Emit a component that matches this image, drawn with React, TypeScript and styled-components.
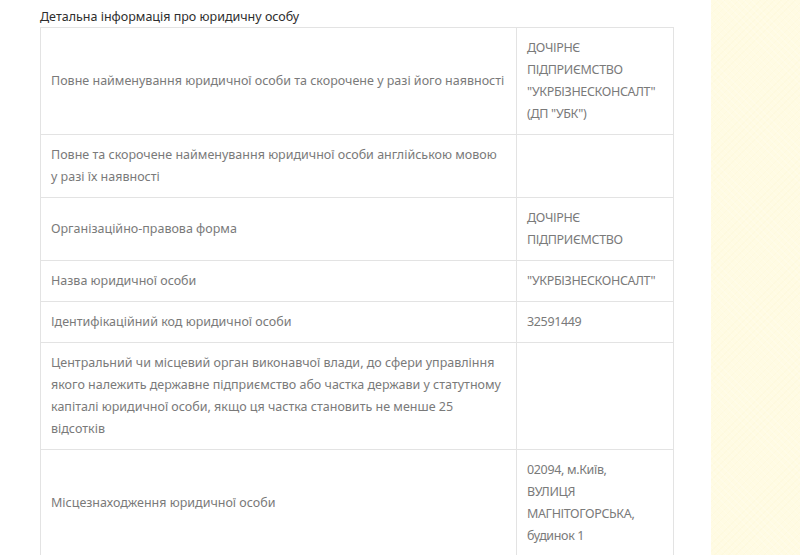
import React from "react";
import styled, { createGlobalStyle } from "styled-components";

const Global = createGlobalStyle`
  html, body { margin: 0; padding: 0; background: #ffffff; }
  body { font-family: "Noto Sans", "Open Sans", sans-serif; }
`;

const Page = styled.div`
  display: flex;
  width: 800px;
  height: 555px;
  overflow: hidden;
`;

const Main = styled.main`
  width: 711px;
  flex: none;
  padding: 8px 0 0 40px;
  box-sizing: border-box;
  background: #ffffff;
`;

const Side = styled.aside`
  flex: 1;
  background-color: #fffbe3;
  background-image:
    repeating-linear-gradient(45deg, rgba(255,255,255,0.18) 0 1px, transparent 1px 5px),
    repeating-linear-gradient(-45deg, rgba(245,235,180,0.10) 0 1px, transparent 1px 5px);
`;

const Title = styled.h2`
  margin: 0 0 2px 0;
  font-size: 12.5px;
  font-weight: 400;
  line-height: 17px;
  color: #2e2e2e;
`;

const Table = styled.table`
  border-collapse: collapse;
  table-layout: fixed;
  width: 634px;
`;

const Cell = styled.td<{ $w?: number }>`
  width: ${(p) => (p.$w ? `${p.$w}px` : "auto")};
  border: 1px solid #e3e3e3;
  padding: 9px 10px;
  font-size: 12.5px;
  line-height: 22px;
  color: #7a7a7a;
  vertical-align: middle;
  word-wrap: break-word;
`;

const ValueLine = styled.span`
  display: block;
  white-space: nowrap;
  letter-spacing: -0.35px;
`;

const rows: [string, string[]][] = [
  [
    "Повне найменування юридичної особи та скорочене у разі його наявності",
    ["ДОЧІРНЄ", "ПІДПРИЄМСТВО", "\"УКРБІЗНЕСКОНСАЛТ\"", "(ДП \"УБК\")"],
  ],
  [
    "Повне та скорочене найменування юридичної особи англійською мовою у разі їх наявності",
    [],
  ],
  ["Організаційно-правова форма", ["ДОЧІРНЄ", "ПІДПРИЄМСТВО"]],
  ["Назва юридичної особи", ["\"УКРБІЗНЕСКОНСАЛТ\""]],
  ["Ідентифікаційний код юридичної особи", ["32591449"]],
  [
    "Центральний чи місцевий орган виконавчої влади, до сфери управління якого належить державне підприємство або частка держави у статутному капіталі юридичної особи, якщо ця частка становить не менше 25 відсотків",
    [],
  ],
  [
    "Місцезнаходження юридичної особи",
    ["02094, м.Київ,", "ВУЛИЦЯ", "МАГНІТОГОРСЬКА,", "будинок 1"],
  ],
];

export default function App() {
  return (
    <>
      <Global />
      <Page>
        <Main>
          <Title>Детальна інформація про юридичну особу</Title>
          <Table>
            <tbody>
              {rows.map(([label, value], i) => (
                <tr key={i}>
                  <Cell $w={455}>{label}</Cell>
                  <Cell>
                    {value.map((v, j) => (
                      <ValueLine key={j}>{v}</ValueLine>
                    ))}
                  </Cell>
                </tr>
              ))}
            </tbody>
          </Table>
        </Main>
        <Side />
      </Page>
    </>
  );
}
